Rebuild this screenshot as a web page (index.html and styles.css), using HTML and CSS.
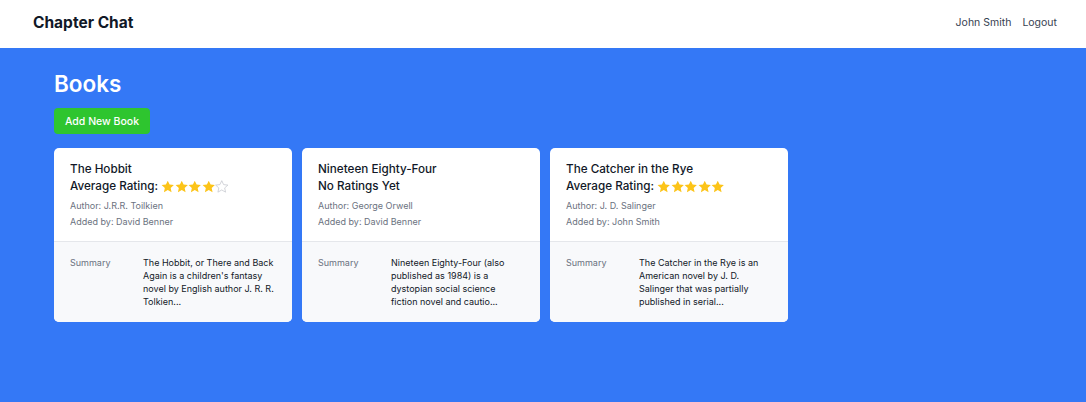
FILE: index.html
```html
<!DOCTYPE html>
<html>
<head>
<meta charset="utf-8">
<link rel="stylesheet" href="styles.css">
</head>
<body>
<header class="nav">
  <div class="brand">Chapter Chat</div>
  <div class="nav-links"><span>John Smith</span><span>Logout</span></div>
</header>
<main class="main">
  <h1 class="title">Books</h1>
  <button class="add-btn">Add New Book</button>
  <div class="cards">
    <div class="card">
      <div class="card-top">
        <div class="book-title">The Hobbit</div>
        <div class="rating">Average Rating: <span class="stars"><svg viewBox="0 0 24 24" class="star full"><path d="M12 1.2l3.3 7 7.6.8-5.7 5.1 1.6 7.5L12 17.7l-6.8 3.9 1.6-7.5L1.1 9l7.6-.8z"/></svg><svg viewBox="0 0 24 24" class="star full"><path d="M12 1.2l3.3 7 7.6.8-5.7 5.1 1.6 7.5L12 17.7l-6.8 3.9 1.6-7.5L1.1 9l7.6-.8z"/></svg><svg viewBox="0 0 24 24" class="star full"><path d="M12 1.2l3.3 7 7.6.8-5.7 5.1 1.6 7.5L12 17.7l-6.8 3.9 1.6-7.5L1.1 9l7.6-.8z"/></svg><svg viewBox="0 0 24 24" class="star full"><path d="M12 1.2l3.3 7 7.6.8-5.7 5.1 1.6 7.5L12 17.7l-6.8 3.9 1.6-7.5L1.1 9l7.6-.8z"/></svg><svg viewBox="0 0 24 24" class="star empty"><path d="M12 1.2l3.3 7 7.6.8-5.7 5.1 1.6 7.5L12 17.7l-6.8 3.9 1.6-7.5L1.1 9l7.6-.8z"/></svg></span></div>
        <div class="meta first">Author: J.R.R. Toilkien</div>
        <div class="meta">Added by: David Benner</div>
      </div>
      <dl class="card-bottom">
        <dt>Summary</dt>
        <dd>The Hobbit, or There and Back Again is a children's fantasy novel by English author J. R. R. Tolkien...</dd>
      </dl>
    </div>
    <div class="card">
      <div class="card-top">
        <div class="book-title">Nineteen Eighty-Four</div>
        <div class="rating">No Ratings Yet</div>
        <div class="meta first">Author: George Orwell</div>
        <div class="meta">Added by: David Benner</div>
      </div>
      <dl class="card-bottom">
        <dt>Summary</dt>
        <dd>Nineteen Eighty-Four (also published as 1984) is a dystopian social science fiction novel and cautio...</dd>
      </dl>
    </div>
    <div class="card">
      <div class="card-top">
        <div class="book-title">The Catcher in the Rye</div>
        <div class="rating">Average Rating: <span class="stars"><svg viewBox="0 0 24 24" class="star full"><path d="M12 1.2l3.3 7 7.6.8-5.7 5.1 1.6 7.5L12 17.7l-6.8 3.9 1.6-7.5L1.1 9l7.6-.8z"/></svg><svg viewBox="0 0 24 24" class="star full"><path d="M12 1.2l3.3 7 7.6.8-5.7 5.1 1.6 7.5L12 17.7l-6.8 3.9 1.6-7.5L1.1 9l7.6-.8z"/></svg><svg viewBox="0 0 24 24" class="star full"><path d="M12 1.2l3.3 7 7.6.8-5.7 5.1 1.6 7.5L12 17.7l-6.8 3.9 1.6-7.5L1.1 9l7.6-.8z"/></svg><svg viewBox="0 0 24 24" class="star full"><path d="M12 1.2l3.3 7 7.6.8-5.7 5.1 1.6 7.5L12 17.7l-6.8 3.9 1.6-7.5L1.1 9l7.6-.8z"/></svg><svg viewBox="0 0 24 24" class="star full"><path d="M12 1.2l3.3 7 7.6.8-5.7 5.1 1.6 7.5L12 17.7l-6.8 3.9 1.6-7.5L1.1 9l7.6-.8z"/></svg></span></div>
        <div class="meta first">Author: J. D. Salinger</div>
        <div class="meta">Added by: John Smith</div>
      </div>
      <dl class="card-bottom">
        <dt>Summary</dt>
        <dd>The Catcher in the Rye is an American novel by J. D. Salinger that was partially published in serial...</dd>
      </dl>
    </div>
  </div>
</main>
</body>
</html>
```
FILE: styles.css
```css
* { box-sizing: border-box; }
html, body { margin: 0; padding: 0; height: 100%; }
body {
  font-family: Inter, "Noto Sans", sans-serif;
  background: #3478f6;
  color: #111827;
}
.nav {
  height: 48px;
  background: #fff;
  display: flex;
  align-items: center;
  justify-content: space-between;
  padding: 0 29px 3px 33px;
}
.brand { font-size: 15.5px; font-weight: 700; color: #111827; }
.nav-links { display: flex; gap: 11px; font-size: 10.5px; color: #374151; }
.main { padding: 22px 54px; }
.title { margin: 0; font-size: 22.5px; font-weight: 600; color: #fff; line-height: 28px; }
.add-btn {
  margin-top: 10px;
  height: 26px;
  padding: 0 11px;
  border: none;
  border-radius: 4px;
  background: #2ec52f;
  color: #fff;
  font-family: inherit;
  font-size: 10.5px;
  font-weight: 500;
}
.cards { display: flex; gap: 10px; margin-top: 14px; }
.card { width: 238px; background: #fff; border-radius: 5px; overflow: hidden; }
.card-top { padding: 13px 16px 11px; border-bottom: 1px solid #e5e7eb; }
.book-title, .rating { font-size: 11.7px; line-height: 17px; font-weight: 500; color: #111827; }
.rating { display: flex; align-items: center; }
.stars { display: inline-flex; margin-left: 3px; }
.star { width: 13.5px; height: 13.5px; }
.star.full path { fill: #fcc419; }
.star.empty path { fill: none; stroke: #c3c6cc; stroke-width: 1.3; }
.meta { font-size: 9px; line-height: 16px; color: #6b7280; }
.meta.first { margin-top: 3px; }
.card-bottom {
  margin: 0;
  background: #f8f9fb;
  padding: 14px 16px;
  display: grid;
  grid-template-columns: 58px 1fr;
  column-gap: 15px;
}
.card-bottom dt { font-size: 9px; line-height: 13px; color: #6b7280; }
.card-bottom dd { margin: 0; font-size: 9px; line-height: 13px; color: #111827; height: 52px; }
```
